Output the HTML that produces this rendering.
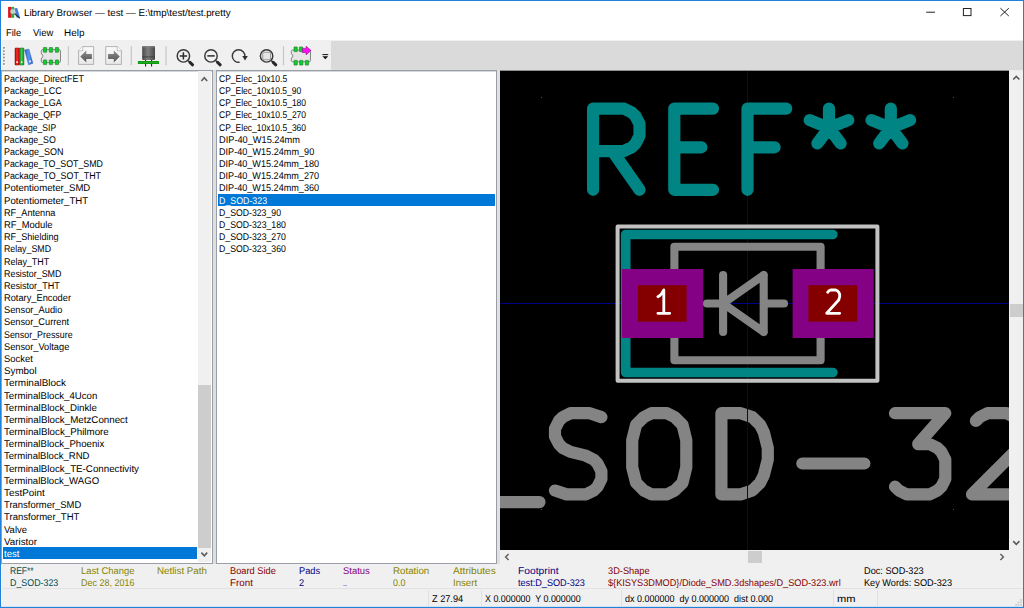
<!DOCTYPE html><html><head><meta charset='utf-8'><title>Library Browser</title><style>
html,body{margin:0;padding:0}
body{width:1024px;height:608px;position:relative;overflow:hidden;background:#f0f0f0;font-family:"Liberation Sans",sans-serif;font-size:9.8px;line-height:12px}
div,span,svg{position:absolute;display:block}
.t{white-space:pre;text-rendering:geometricPrecision;transform-origin:0 0;line-height:12px;height:12px}
</style></head><body>
<div style="left:0;top:0;width:1024px;height:40px;background:#fff"></div>
<div style="left:0;top:40px;width:331px;height:31px;background:#f0f0f0"></div>
<div style="left:331px;top:41px;width:693px;height:30px;background:#dadada"></div>
<div style="left:1px;top:70px;width:210px;height:492px;border:1px solid #9a9ea6;background:#fff"></div>
<div style="left:213px;top:70px;width:3px;height:494px;background:#dedede"></div>
<div style="left:216px;top:70px;width:279px;height:492px;border:1px solid #9a9ea6;background:#fff"></div>
<div style="left:497px;top:70px;width:3px;height:494px;background:#e0e0e0"></div>
<div style="left:2px;top:71px;width:210px;height:1px;background:#d4d6da"></div><div style="left:217px;top:71px;width:279px;height:1px;background:#d4d6da"></div>
<div style="left:3px;top:547px;width:194px;height:12px;background:#0078d7"></div>
<div style="left:218px;top:194px;width:277px;height:12px;background:#0078d7"></div>
<div style="left:198px;top:71px;width:13px;height:491px;background:#f0f0f0"></div>
<div style="left:198px;top:385px;width:13px;height:163px;background:#cdcdcd"></div>
<svg style="left:198px;top:71px" width="13" height="14" viewBox="0 0 13 14"><path d="M3.4 10 L6.3 6.8 L9.2 10" fill="none" stroke="#5c5c5c" stroke-width="1.6"/></svg>
<svg style="left:198px;top:548px" width="13" height="14" viewBox="0 0 13 14"><path d="M3.4 4.6 L6.3 7.8 L9.2 4.6" fill="none" stroke="#5c5c5c" stroke-width="1.6"/></svg>
<svg style="position:absolute;left:500px;top:71px" width="509" height="479" viewBox="500 71 509 479" fill="none" stroke-linecap="round" stroke-linejoin="round">
<rect x="500" y="71" width="509" height="479" fill="#000"/>
<path d="M470 502.1 L539.5 502.1 M601.4 417.1 L589.8 413.2 L570.5 413.2 L562.7 417.1 L558.9 420.9 L555.0 428.7 L555.0 436.4 L558.9 444.1 L562.7 448.0 L570.5 451.9 L585.9 455.7 L593.7 459.6 L597.5 463.5 L601.4 471.2 L601.4 478.9 L597.5 486.7 L593.7 490.5 L585.9 494.4 L566.6 494.4 L555.0 490.5 M651.5 413.2 L667.0 413.2 L674.7 417.1 L682.5 424.8 L686.3 440.3 L686.3 467.3 L682.5 482.8 L674.7 490.5 L667.0 494.4 L651.5 494.4 L643.8 490.5 L636.1 482.8 L632.2 467.3 L632.2 440.3 L636.1 424.8 L643.8 417.1 L651.5 413.2 M721.4 494.4 L721.4 413.2 L740.7 413.2 L752.3 417.1 L760.1 424.8 L763.9 432.5 L767.8 448.0 L767.8 459.6 L763.9 475.1 L760.1 482.8 L752.3 490.5 L740.7 494.4 L721.4 494.4 M802.3 463.5 L864.4 463.5 M895.0 413.2 L945.3 413.2 L918.2 444.1 L929.8 444.1 L937.5 448.0 L941.4 451.9 L945.3 459.6 L945.3 478.9 L941.4 486.7 L937.5 490.5 L929.8 494.4 L906.6 494.4 L898.9 490.5 L895.0 486.7 M975.9 420.9 L979.7 417.1 L987.5 413.2 L1006.8 413.2 L1014.5 417.1 L1018.4 420.9 L1022.3 428.7 L1022.3 436.4 L1018.4 448.0 L972.0 494.4 L1022.3 494.4" stroke="#848484" stroke-width="12.2"/>
<rect x="747" y="71" width="1" height="479" fill="#000084"/><rect x="500" y="303" width="509" height="1" fill="#000084"/>
<rect x="541" y="97" width="1" height="1" fill="#505050"/>
<rect x="953" y="97" width="1" height="1" fill="#505050"/>
<rect x="541" y="509" width="1" height="1" fill="#505050"/>
<rect x="953" y="509" width="1" height="1" fill="#505050"/>
<path d="M674.4 246.7 L820.6 246.7 M820.6 246.7 L820.6 360.3 M820.6 360.3 L674.4 360.3 M674.4 360.3 L674.4 246.7 M723.1 275.1 L723.1 331.9 M723.1 303.5 L706.9 303.5 M723.1 303.5 L763.7 275.1 M763.7 275.1 L763.7 331.9 M763.7 331.9 L723.1 303.5 M763.7 303.5 L784.0 303.5" stroke="#848484" stroke-width="8.1"/>
<path d="M832.8 234.5 L625.7 234.5 L625.7 372.5 L832.8 372.5" stroke="#008484" stroke-width="9.7"/>
<rect x="617.6" y="226.4" width="259.8" height="154.3" stroke="#c2c2c2" stroke-width="4"/>
<path d="M593.1 189.8 L593.1 108.6 L624.0 108.6 L631.8 112.5 L635.6 116.3 L639.5 124.1 L639.5 135.7 L635.6 143.4 L631.8 147.3 L624.0 151.1 L593.1 151.1 M612.4 151.1 L639.5 189.8 M713.0 108.6 L674.3 108.6 L674.3 189.8 L713.0 189.8 M674.3 147.3 L701.4 147.3 M786.2 108.6 L747.5 108.6 L747.5 189.8 M747.5 147.3 L774.6 147.3 M829.0 108.6 L829.0 127.9 M809.7 120.2 L829.0 127.9 L848.3 120.2 M817.4 143.4 L829.0 127.9 L840.6 143.4 M890.8 108.6 L890.8 127.9 M871.5 120.2 L890.8 127.9 L910.1 120.2 M879.2 143.4 L890.8 127.9 L902.4 143.4" stroke="#008484" stroke-width="12.2"/>
<rect x="622.0" y="269.0" width="81.2" height="69.0" fill="#840084"/>
<rect x="637.9" y="285.2" width="48.7" height="36.5" fill="#840000"/>
<rect x="792.6" y="269.0" width="81.2" height="69.0" fill="#840084"/>
<rect x="808.4" y="285.2" width="48.7" height="36.5" fill="#840000"/>
<path d="M657.9 313.3 L669.7 313.3 M663.8 313.3 L663.8 290.0 L661.8 293.3 L659.9 295.6 L657.9 296.7 M827.7 292.2 L828.7 291.1 L830.7 290.0 L835.7 290.0 L837.7 291.1 L838.7 292.2 L839.7 294.4 L839.7 296.7 L838.7 300.0 L826.7 313.3 L839.7 313.3" stroke="#fff" stroke-width="2.8"/>
</svg>
<div style="left:500px;top:70px;width:509px;height:1px;background:#8e8e8e"></div><div style="left:1009px;top:70px;width:14px;height:1px;background:#ececec"></div>
<div style="left:1009px;top:71px;width:14px;height:479px;background:#f0f0f0"></div>
<div style="left:1010px;top:304px;width:13px;height:13px;background:#cdcdcd"></div>
<svg style="left:1009px;top:71px" width="14" height="14" viewBox="0 0 14 14"><path d="M4.2 8.5 L7.3 5.4 L10.4 8.5" fill="none" stroke="#5c5c5c" stroke-width="1.7"/></svg>
<svg style="left:1009px;top:536px" width="14" height="14" viewBox="0 0 14 14"><path d="M4.2 5.2 L7.3 8.3 L10.4 5.2" fill="none" stroke="#5c5c5c" stroke-width="1.7"/></svg>
<div style="left:748px;top:551px;width:14px;height:12px;background:#cdcdcd"></div>
<svg style="left:500px;top:550px" width="14" height="14" viewBox="0 0 14 14"><path d="M8.6 4 L5.6 7 L8.6 10" fill="none" stroke="#606060" stroke-width="1.5"/></svg>
<svg style="left:995px;top:550px" width="14" height="14" viewBox="0 0 14 14"><path d="M5.4 4 L8.4 7 L5.4 10" fill="none" stroke="#606060" stroke-width="1.5"/></svg>
<div style="left:1px;top:588px;width:1022px;height:1px;background:#e2e2e2"></div>
<div style="left:428px;top:590px;width:1px;height:16px;background:#e0e0e0"></div>
<div style="left:481px;top:590px;width:1px;height:16px;background:#e0e0e0"></div>
<div style="left:621px;top:590px;width:1px;height:16px;background:#e0e0e0"></div>
<div style="left:833px;top:590px;width:1px;height:16px;background:#e0e0e0"></div>
<div style="left:877px;top:590px;width:1px;height:16px;background:#e0e0e0"></div>
<div style="left:1px;top:40px;width:1px;height:30px;background:#fafafa"></div><div style="left:1px;top:565px;width:1px;height:41px;background:#f8f8f8"></div>
<svg style="left:0;top:40px" width="340" height="30" viewBox="0 40 340 30">
<defs>
<linearGradient id="gr" x1="0" x2="1" y1="0" y2="0"><stop offset="0" stop-color="#b80000"/><stop offset=".45" stop-color="#f03030"/><stop offset="1" stop-color="#c00000"/></linearGradient>
<linearGradient id="gg" x1="0" x2="1" y1="0" y2="0"><stop offset="0" stop-color="#108020"/><stop offset=".45" stop-color="#40c850"/><stop offset="1" stop-color="#109020"/></linearGradient>
<linearGradient id="gb" x1="0" x2="1" y1="0" y2="0"><stop offset="0" stop-color="#2a60c8"/><stop offset=".5" stop-color="#5a98f0"/><stop offset="1" stop-color="#2a64d0"/></linearGradient>
<linearGradient id="gc" x1="0" x2="1" y1="0" y2="0"><stop offset="0" stop-color="#4a4a4a"/><stop offset=".45" stop-color="#808080"/><stop offset="1" stop-color="#484848"/></linearGradient>
<linearGradient id="gp" x1="0" x2="0" y1="0" y2="1"><stop offset="0" stop-color="#fafafa"/><stop offset="1" stop-color="#e8e8e8"/></linearGradient>
<linearGradient id="ga" x1="0" x2="0" y1="0" y2="1"><stop offset="0" stop-color="#929292"/><stop offset=".55" stop-color="#6c6c6c"/><stop offset="1" stop-color="#565656"/></linearGradient>
</defs>
<rect x="3.9" y="47.90" width="1.6" height="1.6" fill="#fdfdfd"/><rect x="3.1" y="47.00" width="1.7" height="1.7" fill="#8e8e8e"/>
<rect x="3.9" y="51.13" width="1.6" height="1.6" fill="#fdfdfd"/><rect x="3.1" y="50.23" width="1.7" height="1.7" fill="#8e8e8e"/>
<rect x="3.9" y="54.36" width="1.6" height="1.6" fill="#fdfdfd"/><rect x="3.1" y="53.46" width="1.7" height="1.7" fill="#8e8e8e"/>
<rect x="3.9" y="57.59" width="1.6" height="1.6" fill="#fdfdfd"/><rect x="3.1" y="56.69" width="1.7" height="1.7" fill="#8e8e8e"/>
<rect x="3.9" y="60.82" width="1.6" height="1.6" fill="#fdfdfd"/><rect x="3.1" y="59.92" width="1.7" height="1.7" fill="#8e8e8e"/>
<rect x="3.9" y="64.05" width="1.6" height="1.6" fill="#fdfdfd"/><rect x="3.1" y="63.15" width="1.7" height="1.7" fill="#8e8e8e"/>
<rect x="15" y="48" width="4.4" height="17" rx=".6" fill="url(#gr)" stroke="#900000" stroke-width=".5"/>
<rect x="19.5" y="48" width="4.4" height="17" rx=".6" fill="url(#gg)" stroke="#0a6a14" stroke-width=".5"/>
<rect x="16.3" y="61.3" width="1.7" height="1.7" fill="#fff" opacity=".9"/><rect x="20.8" y="61.3" width="1.7" height="1.7" fill="#fff" opacity=".9"/>
<path d="M24.7 49.9 L28.9 49.2 L32.8 63.3 L28.6 64.7 Z" fill="url(#gb)" stroke="#2050b0" stroke-width=".5"/>
<path d="M28.9 60.8 L30.6 60.3 L31.1 62 L29.4 62.5 Z" fill="#fff" opacity=".9"/>
<path d="M42.8 49.6 H58.9 Q60.5 49.6 60.5 51.2 V61.0 Q60.5 62.6 58.9 62.6 H42.8 Q41.3 62.6 41.3 61.0 V58.2 Q42.9 58.0 42.9 56.1 Q42.9 54.2 41.3 54.0 V51.2 Q41.3 49.6 42.8 49.6 Z" fill="#e6e6e6" stroke="#7c7c7c" stroke-width=".9"/><rect x="43.4" y="47.5" width="3.3" height="4.7" rx=".3" fill="#08d428" stroke="#2a6a32" stroke-width=".6"/><rect x="49.3" y="47.5" width="3.3" height="4.7" rx=".3" fill="#08d428" stroke="#2a6a32" stroke-width=".6"/><rect x="55.3" y="47.5" width="3.3" height="4.7" rx=".3" fill="#08d428" stroke="#2a6a32" stroke-width=".6"/><rect x="43.4" y="59.9" width="3.3" height="4.7" rx=".3" fill="#08d428" stroke="#2a6a32" stroke-width=".6"/><rect x="49.3" y="59.9" width="3.3" height="4.7" rx=".3" fill="#08d428" stroke="#2a6a32" stroke-width=".6"/><rect x="55.3" y="59.9" width="3.3" height="4.7" rx=".3" fill="#08d428" stroke="#2a6a32" stroke-width=".6"/>
<rect x="67.80000000000001" y="46.3" width="1.2" height="19" fill="#c6c6c6"/>
<rect x="130.70000000000002" y="46.3" width="1.2" height="19" fill="#c6c6c6"/>
<rect x="165.4" y="46.3" width="1.2" height="19" fill="#c6c6c6"/>
<rect x="282.9" y="46.3" width="1.2" height="19" fill="#c6c6c6"/>
<path d="M82.8 46.6 H93.6 V64.4 H78.6 V50.8 Z" fill="url(#gp)" stroke="#a2a2a2" stroke-width=".8"/><path d="M78.6 50.8 H82.8 V46.6" fill="#fff" stroke="#a8a8a8" stroke-width=".7"/>
<path d="M80.3 56.5 L86.3 50.5 V54 H91.9 V59 H86.3 V62.5 Z" fill="url(#ga)"/>
<path d="M105.7 46.6 H117.2 L121.4 50.8 V64.4 H105.7 Z" fill="url(#gp)" stroke="#a2a2a2" stroke-width=".8"/><path d="M117.2 46.6 V50.8 H121.4" fill="#fff" stroke="#a8a8a8" stroke-width=".7"/>
<path d="M119.8 56.5 L113.8 50.5 V54 H108.1 V59 H113.8 V62.5 Z" fill="url(#ga)"/>
<rect x="145" y="59.5" width="1.1" height="7" fill="#2c2c2c"/><rect x="151" y="59.5" width="1.1" height="7" fill="#2c2c2c"/>
<path d="M142.2 47.2 Q142.2 46.1 143.4 46.1 H153.8 Q155 46.1 155 47.2 V59.2 Q155 60 154 60 H143.2 Q142.2 60 142.2 59.2 Z" fill="url(#gc)"/>
<rect x="142.2" y="56.4" width="12.8" height="1" fill="#333" opacity=".7"/><rect x="142.2" y="46.1" width="12.8" height="1.3" rx=".6" fill="#8a8a8a" opacity=".6"/>
<rect x="137.9" y="61" width="21.1" height="3" fill="#109a10"/><rect x="137.9" y="62.2" width="21.1" height=".7" fill="#30c030" opacity=".6"/>
<circle cx="183.4" cy="55.9" r="6.2" fill="none" stroke="#383838" stroke-width="1.45"/><path d="M188.0 60.5 L189.70000000000002 62.199999999999996" stroke="#383838" stroke-width="1.6"/><path d="M190.0 62.3 L192.6 64.8" stroke="#282828" stroke-width="3" stroke-linecap="round"/><path d="M179.7 55.9 H187.1 M183.4 52.2 V59.6" stroke="#2c2c2c" stroke-width="1.5"/>
<circle cx="211" cy="55.9" r="6.2" fill="none" stroke="#383838" stroke-width="1.45"/><path d="M215.6 60.5 L217.3 62.199999999999996" stroke="#383838" stroke-width="1.6"/><path d="M217.6 62.3 L220.2 64.8" stroke="#282828" stroke-width="3" stroke-linecap="round"/><path d="M207.3 55.9 H214.7" stroke="#2c2c2c" stroke-width="1.5"/>
<path d="M239.6 62.2 A6.3 6.3 0 1 1 244.9 56.4" fill="none" stroke="#383838" stroke-width="1.4"/><path d="M242.3 56 H247.8 L245 60.6 Z" fill="#303030"/>
<circle cx="266.6" cy="55.9" r="6.2" fill="none" stroke="#383838" stroke-width="1.45"/><path d="M271.20000000000005 60.5 L272.90000000000003 62.199999999999996" stroke="#383838" stroke-width="1.6"/><path d="M273.20000000000005 62.3 L275.8 64.8" stroke="#282828" stroke-width="3" stroke-linecap="round"/><rect x="262.8" y="52.2" width="7.8" height="7.6" fill="#e4e4e4" stroke="#909090" stroke-width=".9"/>
<path d="M292.8 50.0 H308.90000000000003 Q310.5 50.0 310.5 51.6 V60.3 Q310.5 61.9 308.90000000000003 61.9 H292.8 Q291.3 61.9 291.3 60.3 V58.050000000000004 Q292.90000000000003 57.85 292.90000000000003 55.95 Q292.90000000000003 54.050000000000004 291.3 53.85 V51.6 Q291.3 50.0 292.8 50.0 Z" fill="#e6e6e6" stroke="#7c7c7c" stroke-width=".9"/><rect x="294" y="46.9" width="3.3" height="4.7" rx=".3" fill="#08d428" stroke="#2a6a32" stroke-width=".6"/><rect x="299.4" y="46.9" width="3.3" height="4.7" rx=".3" fill="#08d428" stroke="#2a6a32" stroke-width=".6"/><rect x="294" y="60.4" width="3.3" height="4.7" rx=".3" fill="#08d428" stroke="#2a6a32" stroke-width=".6"/><rect x="299.6" y="60.4" width="3.3" height="4.7" rx=".3" fill="#08d428" stroke="#2a6a32" stroke-width=".6"/><rect x="305.3" y="60.4" width="3.3" height="4.7" rx=".3" fill="#08d428" stroke="#2a6a32" stroke-width=".6"/>
<path d="M302.4 48.4 H306.1 V46.2 L311.1 50.5 L306.1 54.8 V52.6 H302.4 Z" fill="#ff10f0" stroke="#8a0a8a" stroke-width=".6"/>
<rect x="322.4" y="54.1" width="5.8" height="1" fill="#111"/><path d="M322.4 56.2 H328.2 L325.3 59.2 Z" fill="#111"/>
</svg>
<svg style="left:6px;top:5px" width="16" height="15" viewBox="6 5 16 15"><rect x="8.1" y="6.9" width="3" height="10.9" fill="#d81818"/><rect x="11.1" y="6.9" width="3.1" height="10.9" fill="#28a838"/><path d="M14.5 8.2 L17.2 7.9 L19.8 16.8 L16.6 17.8 Z" fill="#3d7ee0"/><circle cx="12.7" cy="11.5" r="2.7" fill="#e8f0f0" opacity=".7" stroke="#667" stroke-width=".5"/><path d="M15 14 L19.3 17.8" stroke="#333" stroke-width="1.5" stroke-linecap="round"/></svg>
<svg style="left:920px;top:4px" width="96" height="16" viewBox="920 4 96 16"><rect x="926.2" y="11.7" width="8.8" height="1" fill="#222"/><rect x="963.4" y="8.5" width="7.6" height="7.1" fill="none" stroke="#222" stroke-width="1"/><path d="M1000.4 8.2 L1008.8 16 M1008.8 8.2 L1000.4 16" stroke="#222" stroke-width="1"/></svg>
<svg style="left:1010px;top:594px" width="13" height="13" viewBox="0 0 13 13"><rect x="10.2" y="5.2" width="1.6" height="1.5" fill="#c2c2c2"/><rect x="10.2" y="7.7" width="1.6" height="1.5" fill="#c2c2c2"/><rect x="10.2" y="10.2" width="1.6" height="1.5" fill="#c2c2c2"/><rect x="7.6" y="7.7" width="1.6" height="1.5" fill="#c2c2c2"/><rect x="7.6" y="10.2" width="1.6" height="1.5" fill="#c2c2c2"/><rect x="5.3" y="10.2" width="1.6" height="1.5" fill="#c2c2c2"/></svg>
<span class="t" style="left:4.0px;top:73.85px;color:#000;transform:scaleX(0.9114)">Package_DirectFET</span>
<span class="t" style="left:4.0px;top:86.03px;color:#000;transform:scaleX(0.9132)">Package_LCC</span>
<span class="t" style="left:4.0px;top:98.21px;color:#000;transform:scaleX(0.9132)">Package_LGA</span>
<span class="t" style="left:4.0px;top:110.39px;color:#000;transform:scaleX(0.8993)">Package_QFP</span>
<span class="t" style="left:4.0px;top:122.57px;color:#000;transform:scaleX(0.8792)">Package_SIP</span>
<span class="t" style="left:4.0px;top:134.75px;color:#000;transform:scaleX(0.8972)">Package_SO</span>
<span class="t" style="left:4.0px;top:146.93px;color:#000;transform:scaleX(0.9165)">Package_SON</span>
<span class="t" style="left:4.0px;top:159.11px;color:#000;transform:scaleX(0.9015)">Package_TO_SOT_SMD</span>
<span class="t" style="left:4.0px;top:171.29px;color:#000;transform:scaleX(0.9057)">Package_TO_SOT_THT</span>
<span class="t" style="left:4.0px;top:183.47px;color:#000;transform:scaleX(0.9783)">Potentiometer_SMD</span>
<span class="t" style="left:4.0px;top:195.65px;color:#000;transform:scaleX(0.9850)">Potentiometer_THT</span>
<span class="t" style="left:4.0px;top:207.83px;color:#000;transform:scaleX(0.9343)">RF_Antenna</span>
<span class="t" style="left:4.0px;top:220.01px;color:#000;transform:scaleX(0.9577)">RF_Module</span>
<span class="t" style="left:4.0px;top:232.19px;color:#000;transform:scaleX(0.9298)">RF_Shielding</span>
<span class="t" style="left:4.0px;top:244.37px;color:#000;transform:scaleX(0.8990)">Relay_SMD</span>
<span class="t" style="left:4.0px;top:256.55px;color:#000;transform:scaleX(0.9123)">Relay_THT</span>
<span class="t" style="left:4.0px;top:268.73px;color:#000;transform:scaleX(0.9104)">Resistor_SMD</span>
<span class="t" style="left:4.0px;top:280.91px;color:#000;transform:scaleX(0.9216)">Resistor_THT</span>
<span class="t" style="left:4.0px;top:293.09px;color:#000;transform:scaleX(0.9464)">Rotary_Encoder</span>
<span class="t" style="left:4.0px;top:305.27px;color:#000;transform:scaleX(0.9472)">Sensor_Audio</span>
<span class="t" style="left:4.0px;top:317.45px;color:#000;transform:scaleX(0.9411)">Sensor_Current</span>
<span class="t" style="left:4.0px;top:329.63px;color:#000;transform:scaleX(0.9062)">Sensor_Pressure</span>
<span class="t" style="left:4.0px;top:341.81px;color:#000;transform:scaleX(0.9438)">Sensor_Voltage</span>
<span class="t" style="left:4.0px;top:353.99px;color:#000;transform:scaleX(0.9615)">Socket</span>
<span class="t" style="left:4.0px;top:366.17px;color:#000;transform:scaleX(1.0009)">Symbol</span>
<span class="t" style="left:4.0px;top:378.35px;color:#000;transform:scaleX(1.0167)">TerminalBlock</span>
<span class="t" style="left:4.0px;top:390.53px;color:#000;transform:scaleX(0.9847)">TerminalBlock_4Ucon</span>
<span class="t" style="left:4.0px;top:402.71px;color:#000;transform:scaleX(0.9919)">TerminalBlock_Dinkle</span>
<span class="t" style="left:4.0px;top:414.89px;color:#000;transform:scaleX(0.9963)">TerminalBlock_MetzConnect</span>
<span class="t" style="left:4.0px;top:427.07px;color:#000;transform:scaleX(0.9972)">TerminalBlock_Philmore</span>
<span class="t" style="left:4.0px;top:439.25px;color:#000;transform:scaleX(0.9848)">TerminalBlock_Phoenix</span>
<span class="t" style="left:4.0px;top:451.43px;color:#000;transform:scaleX(0.9754)">TerminalBlock_RND</span>
<span class="t" style="left:4.0px;top:463.61px;color:#000;transform:scaleX(0.9957)">TerminalBlock_TE-Connectivity</span>
<span class="t" style="left:4.0px;top:475.79px;color:#000;transform:scaleX(0.9795)">TerminalBlock_WAGO</span>
<span class="t" style="left:4.0px;top:487.97px;color:#000;transform:scaleX(1.0096)">TestPoint</span>
<span class="t" style="left:4.0px;top:500.15px;color:#000;transform:scaleX(0.9638)">Transformer_SMD</span>
<span class="t" style="left:4.0px;top:512.33px;color:#000;transform:scaleX(0.9731)">Transformer_THT</span>
<span class="t" style="left:4.0px;top:524.51px;color:#000;transform:scaleX(0.9671)">Valve</span>
<span class="t" style="left:4.0px;top:536.69px;color:#000;transform:scaleX(0.9960)">Varistor</span>
<span class="t" style="left:4.0px;top:548.87px;color:#fff;transform:scaleX(0.9749)">test</span>
<span class="t" style="left:219.2px;top:73.85px;color:#000;transform:scaleX(0.8695)">CP_Elec_10x10.5</span>
<span class="t" style="left:219.2px;top:86.03px;color:#000;transform:scaleX(0.8673)">CP_Elec_10x10.5_90</span>
<span class="t" style="left:219.2px;top:98.21px;color:#000;transform:scaleX(0.8690)">CP_Elec_10x10.5_180</span>
<span class="t" style="left:219.2px;top:110.39px;color:#000;transform:scaleX(0.8690)">CP_Elec_10x10.5_270</span>
<span class="t" style="left:219.2px;top:122.57px;color:#000;transform:scaleX(0.8690)">CP_Elec_10x10.5_360</span>
<span class="t" style="left:219.2px;top:134.75px;color:#000;transform:scaleX(0.9415)">DIP-40_W15.24mm</span>
<span class="t" style="left:219.2px;top:146.93px;color:#000;transform:scaleX(0.9299)">DIP-40_W15.24mm_90</span>
<span class="t" style="left:219.2px;top:159.11px;color:#000;transform:scaleX(0.9283)">DIP-40_W15.24mm_180</span>
<span class="t" style="left:219.2px;top:171.29px;color:#000;transform:scaleX(0.9283)">DIP-40_W15.24mm_270</span>
<span class="t" style="left:219.2px;top:183.47px;color:#000;transform:scaleX(0.9283)">DIP-40_W15.24mm_360</span>
<span class="t" style="left:219.2px;top:195.65px;color:#fff;transform:scaleX(0.9012)">D_SOD-323</span>
<span class="t" style="left:219.2px;top:207.83px;color:#000;transform:scaleX(0.8893)">D_SOD-323_90</span>
<span class="t" style="left:219.2px;top:220.01px;color:#000;transform:scaleX(0.8901)">D_SOD-323_180</span>
<span class="t" style="left:219.2px;top:232.19px;color:#000;transform:scaleX(0.8901)">D_SOD-323_270</span>
<span class="t" style="left:219.2px;top:244.37px;color:#000;transform:scaleX(0.8901)">D_SOD-323_360</span>
<span class="t" style="left:24.0px;top:8.20px;color:#000;transform:scaleX(0.9960)">Library Browser — test — E:\tmp\test/test.pretty</span>
<span class="t" style="left:6.0px;top:28.10px;color:#000;transform:scaleX(0.9559)">File</span>
<span class="t" style="left:32.7px;top:28.10px;color:#000;transform:scaleX(0.9591)">View</span>
<span class="t" style="left:64.2px;top:28.10px;color:#000;transform:scaleX(1.0121)">Help</span>
<span class="t" style="left:9.6px;top:565.70px;color:#004c50;transform:scaleX(0.8702)">REF**</span>
<span class="t" style="left:9.6px;top:578.30px;color:#004c50;transform:scaleX(0.9049)">D_SOD-323</span>
<span class="t" style="left:80.7px;top:565.70px;color:#848400;transform:scaleX(0.9611)">Last Change</span>
<span class="t" style="left:80.7px;top:578.30px;color:#848400;transform:scaleX(0.9162)">Dec 28, 2016</span>
<span class="t" style="left:156.8px;top:565.70px;color:#848400;transform:scaleX(0.9958)">Netlist Path</span>
<span class="t" style="left:230.2px;top:565.70px;color:#840000;transform:scaleX(0.9446)">Board Side</span>
<span class="t" style="left:230.2px;top:578.30px;color:#840000;transform:scaleX(1.0011)">Front</span>
<span class="t" style="left:299.4px;top:565.70px;color:#000084;transform:scaleX(0.9443)">Pads</span>
<span class="t" style="left:299.4px;top:578.30px;color:#000084;transform:scaleX(0.9510)">2</span>
<span class="t" style="left:343.0px;top:565.70px;color:#840084;transform:scaleX(0.9611)">Status</span>
<span class="t" style="left:343.0px;top:578.30px;color:#840084;transform:scaleX(0.7649)">..</span>
<span class="t" style="left:392.9px;top:565.70px;color:#848400;transform:scaleX(0.9945)">Rotation</span>
<span class="t" style="left:392.9px;top:578.30px;color:#848400;transform:scaleX(0.9143)">0.0</span>
<span class="t" style="left:452.9px;top:565.70px;color:#848400;transform:scaleX(1.0341)">Attributes</span>
<span class="t" style="left:452.9px;top:578.30px;color:#848400;transform:scaleX(0.9830)">Insert</span>
<span class="t" style="left:518.3px;top:565.70px;color:#000084;transform:scaleX(1.0473)">Footprint</span>
<span class="t" style="left:518.3px;top:578.30px;color:#000084;transform:scaleX(0.9308)">test:D_SOD-323</span>
<span class="t" style="left:608.0px;top:565.70px;color:#840000;transform:scaleX(0.9428)">3D-Shape</span>
<span class="t" style="left:608.0px;top:578.30px;color:#840000;transform:scaleX(0.9371)">${KISYS3DMOD}/Diode_SMD.3dshapes/D_SOD-323.wrl</span>
<span class="t" style="left:863.8px;top:565.70px;color:#000;transform:scaleX(0.9369)">Doc: SOD-323</span>
<span class="t" style="left:863.8px;top:578.30px;color:#000;transform:scaleX(0.9360)">Key Words: SOD-323</span>
<span class="t" style="left:431.5px;top:593.50px;color:#000;transform:scaleX(0.9358)">Z 27.94</span>
<span class="t" style="left:484.6px;top:593.50px;color:#000;transform:scaleX(0.9076)">X 0.000000  Y 0.000000</span>
<span class="t" style="left:625.3px;top:593.50px;color:#000;transform:scaleX(0.9173)">dx 0.000000  dy 0.000000  dist 0.000</span>
<span class="t" style="left:836.7px;top:593.50px;color:#000;transform:scaleX(1.1330)">mm</span>
<div style="left:0;top:0;width:1022px;height:606px;border:1px solid #1f82d8"></div>
<div style="left:1px;top:606px;width:1022px;height:1px;background:#cfe3f5"></div>
</body></html>
